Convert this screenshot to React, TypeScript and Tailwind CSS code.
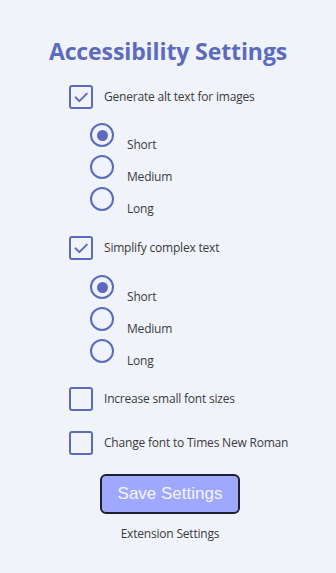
import React from 'react';

function CheckBox({ checked }: { checked: boolean }) {
  return (
    <span className="flex h-6 w-6 shrink-0 items-center justify-center rounded-[3px] border-2 border-[#5c6bc0] bg-[#f0f3f9]">
      {checked && (
        <svg viewBox="0 0 24 24" className="h-5 w-5" fill="none" stroke="#5c6bc0" strokeWidth="2.4" strokeLinecap="round" strokeLinejoin="round">
          <path d="M5.5 12.5l4.5 4.5L19 8" />
        </svg>
      )}
    </span>
  );
}

function Radio({ checked }: { checked: boolean }) {
  return (
    <span className="flex h-6 w-6 shrink-0 items-center justify-center rounded-full border-2 border-[#5c6bc0]">
      {checked && <span className="h-[11px] w-[11px] rounded-full bg-[#5c6bc0]" />}
    </span>
  );
}

function CheckRow({ label, checked, className }: { label: string; checked: boolean; className: string }) {
  return (
    <label className={`flex h-6 items-center gap-[11px] ${className}`}>
      <CheckBox checked={checked} />
      <span className="text-[12px] leading-5 tracking-[-0.2px] text-[#3b3b3b]">{label}</span>
    </label>
  );
}

function RadioGroup({ className }: { className: string }) {
  const options = ['Short', 'Medium', 'Long'];
  return (
    <div className={`flex flex-col gap-2 pl-[21px] ${className}`}>
      {options.map((opt, i) => (
        <label key={opt} className="flex h-6 items-start gap-[13px]">
          <Radio checked={i === 0} />
          <span className="mt-3 text-[12px] leading-5 tracking-[-0.2px] text-[#3b3b3b]">{opt}</span>
        </label>
      ))}
    </div>
  );
}

export default function App() {
  return (
    <div className="min-h-[573px] bg-[#f0f3f9] pt-[35px]" style={{ fontFamily: '"Open Sans", "Noto Sans", sans-serif' }}>
      <h1 className="text-center text-[23px] font-bold leading-8 tracking-[-0.1px] text-[#5c6bc0]">Accessibility Settings</h1>
      <div className="pl-[69px]">
        <CheckRow label="Generate alt text for images" checked className="mt-[18px]" />
        <RadioGroup className="mt-[14px]" />
        <CheckRow label="Simplify complex text" checked className="mt-[25px]" />
        <RadioGroup className="mt-[15px]" />
        <CheckRow label="Increase small font sizes" checked={false} className="mt-6" />
        <CheckRow label="Change font to Times New Roman" checked={false} className="mt-5" />
      </div>
      <div className="mt-[19px] flex flex-col items-center pl-1">
        <button className="h-10 w-[140px] rounded-md border-2 border-[#1f1f2e] bg-[#9fa8ff] text-[17px] text-[#f5f6ff]" style={{ fontFamily: '"Liberation Sans", Arial, sans-serif' }}>
          Save Settings
        </button>
        <div className="mt-[10px] text-[12px] leading-5 tracking-[-0.2px] text-[#3b3b3b]">Extension Settings</div>
      </div>
    </div>
  );
}
